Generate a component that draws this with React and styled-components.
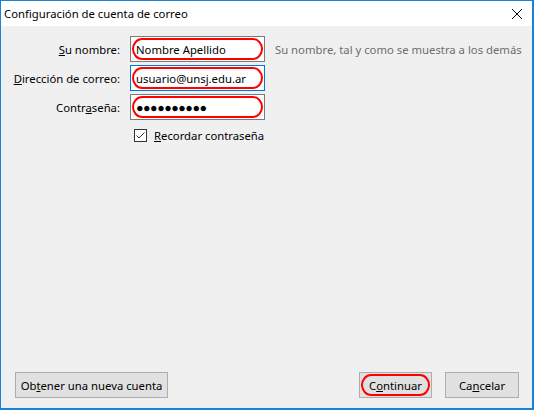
import React from "react";
import styled, { createGlobalStyle, css } from "styled-components";

const GlobalStyle = createGlobalStyle`
  html, body {
    margin: 0;
    padding: 0;
    width: 534px;
    height: 410px;
    overflow: hidden;
    background: #ffffff;
  }
  * { box-sizing: border-box; }
`;

const FONT = `"Noto Sans", "Open Sans", sans-serif`;

const Window = styled.div`
  width: 534px;
  height: 410px;
  display: flex;
  flex-direction: column;
  border: 1px solid #1883d7;
  border-right-width: 2px;
  border-bottom-width: 2px;
  font-family: ${FONT};
  font-size: 11.3px;
  color: #000;
`;

const TitleBar = styled.div`
  height: 25px;
  flex: none;
  background: #ffffff;
  display: flex;
  align-items: center;
  justify-content: space-between;
  padding: 0 9px 0 3px;
`;

const Title = styled.span`
  line-height: 16px;
`;

const CloseButton = styled.div`
  width: 12px;
  height: 12px;
  display: flex;
  align-items: center;
  justify-content: center;
`;

const Body = styled.div`
  flex: 1;
  background: #f0f0f0;
  display: flex;
  flex-direction: column;
  justify-content: space-between;
`;

const Form = styled.div`
  display: grid;
  grid-template-columns: 119px 135px auto;
  column-gap: 10px;
  row-gap: 3px;
  padding-top: 10px;
  align-items: center;
`;

const Label = styled.label`
  text-align: right;
  white-space: nowrap;
`;

const marked = css`
  &::after {
    content: "";
    position: absolute;
    inset: 1px;
    border: 2px solid #ff0000;
    border-radius: 11px / 12px;
    pointer-events: none;
  }
`;

const Field = styled.div`
  position: relative;
  height: 26px;
  background: #ffffff;
  border: 1px solid ${(p) => (p.$focused ? "#0078d7" : "#7a7a7a")};
  display: flex;
  align-items: center;
  padding-left: 5px;
  white-space: nowrap;
  ${(p) => p.$marked && marked}
`;

const Dots = styled.span`
  font-size: 12.5px;
  letter-spacing: -0.5px;
`;

const Hint = styled.span`
  color: #6d6d6d;
  white-space: nowrap;
`;

const CheckRow = styled.div`
  grid-column: 2 / 4;
  display: flex;
  align-items: center;
  gap: 7px;
  padding-left: 4px;
  margin-top: 3px;
  height: 18px;
`;

const CheckBox = styled.div`
  width: 13px;
  height: 13px;
  border: 1px solid #333333;
  background: #ffffff;
  display: flex;
  align-items: center;
  justify-content: center;
`;

const Footer = styled.div`
  display: flex;
  align-items: center;
  padding: 0 13px 10px 14px;
`;

const Button = styled.div`
  position: relative;
  height: 26px;
  width: ${(p) => p.$w}px;
  margin-left: ${(p) => p.$ml || 0}px;
  background: #e1e1e1;
  border: 1px solid #adadad;
  display: flex;
  align-items: center;
  justify-content: center;
  white-space: nowrap;
  ${(p) => p.$marked && marked}
`;

const Spacer = styled.div`
  flex: 1;
`;

export default function App() {
  return (
    <>
      <GlobalStyle />
      <Window>
        <TitleBar>
          <Title>Configuración de cuenta de correo</Title>
          <CloseButton>
            <svg width="12" height="12" viewBox="0 0 12 12">
              <path d="M1 1 L11 11 M11 1 L1 11" stroke="#000" strokeWidth="1" />
            </svg>
          </CloseButton>
        </TitleBar>
        <Body>
          <Form>
            <Label>
              <u>S</u>u nombre:
            </Label>
            <Field $marked>Nombre Apellido</Field>
            <Hint>Su nombre, tal y como se muestra a los demás</Hint>

            <Label>
              <u>D</u>irección de correo:
            </Label>
            <Field $marked $focused>
              usuario@unsj.edu.ar
            </Field>
            <span />

            <Label>
              Contr<u>a</u>seña:
            </Label>
            <Field $marked>
              <Dots>●●●●●●●●●●</Dots>
            </Field>
            <span />

            <span />
            <CheckRow>
              <CheckBox>
                <svg width="11" height="11" viewBox="0 0 11 11">
                  <path d="M1.5 5.5 L4 8 L9.5 2.5" stroke="#333" strokeWidth="1" fill="none" />
                </svg>
              </CheckBox>
              <span>
                <u>R</u>ecordar contraseña
              </span>
            </CheckRow>
          </Form>
          <Footer>
            <Button $w={153}>
              Ob<u>t</u>ener una nueva cuenta
            </Button>
            <Spacer />
            <Button $w={73} $marked>
              C<u>o</u>ntinuar
            </Button>
            <Button $w={74} $ml={13}>
              Ca<u>n</u>celar
            </Button>
          </Footer>
        </Body>
      </Window>
    </>
  );
}
